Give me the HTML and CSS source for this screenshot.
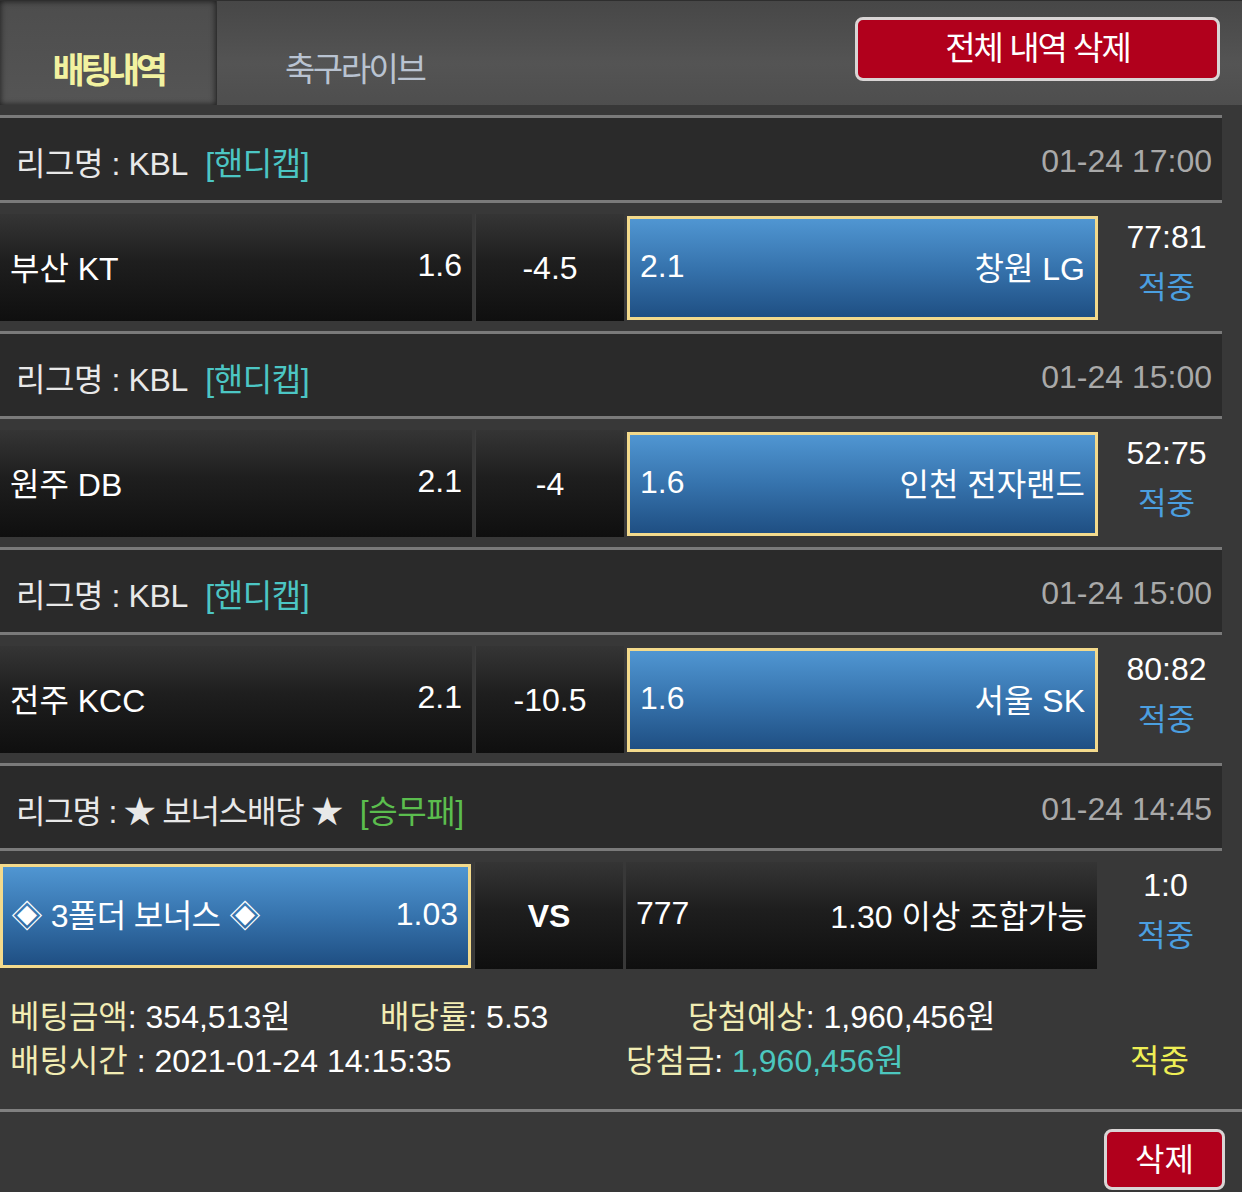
FILE: index.html
```html
<!DOCTYPE html>
<html lang="ko">
<head>
<meta charset="utf-8">
<title>배팅내역</title>
<link rel="stylesheet" href="styles.css">
</head>
<body>
<div class="page">
  <header class="topbar">
    <div class="tab tab-active">배팅내역</div>
    <div class="tab tab-live">축구라이브</div>
    <div class="topbar-spacer"></div>
    <button class="btn-red btn-delete-all">전체 내역 삭제</button>
  </header>

  <section class="slip">
    <div class="league">
      <span class="league-name">리그명 : KBL <span class="tag tag-hdp">[핸디캡]</span></span>
      <span class="league-date">01-24 17:00</span>
    </div>
    <div class="match">
      <div class="cell cell-dark cell-team"><span>부산 KT</span><span>1.6</span></div>
      <div class="cell cell-dark cell-mid"><span class="mid-val">-4.5</span></div>
      <div class="cell cell-blue cell-team"><span>2.1</span><span>창원 LG</span></div>
      <div class="result"><span class="score">77:81</span><span class="hit">적중</span></div>
    </div>

    <div class="league">
      <span class="league-name">리그명 : KBL <span class="tag tag-hdp">[핸디캡]</span></span>
      <span class="league-date">01-24 15:00</span>
    </div>
    <div class="match">
      <div class="cell cell-dark cell-team"><span>원주 DB</span><span>2.1</span></div>
      <div class="cell cell-dark cell-mid"><span class="mid-val">-4</span></div>
      <div class="cell cell-blue cell-team"><span>1.6</span><span>인천 전자랜드</span></div>
      <div class="result"><span class="score">52:75</span><span class="hit">적중</span></div>
    </div>

    <div class="league">
      <span class="league-name">리그명 : KBL <span class="tag tag-hdp">[핸디캡]</span></span>
      <span class="league-date">01-24 15:00</span>
    </div>
    <div class="match">
      <div class="cell cell-dark cell-team"><span>전주 KCC</span><span>2.1</span></div>
      <div class="cell cell-dark cell-mid"><span class="mid-val">-10.5</span></div>
      <div class="cell cell-blue cell-team"><span>1.6</span><span>서울 SK</span></div>
      <div class="result"><span class="score">80:82</span><span class="hit">적중</span></div>
    </div>

    <div class="league">
      <span class="league-name league-bonus">리그명 : ★ 보너스배당 ★ <span class="tag tag-wdl">[승무패]</span></span>
      <span class="league-date">01-24 14:45</span>
    </div>
    <div class="match match-bonus">
      <div class="cell cell-blue cell-team cell-left"><span class="bonus-name">◈ 3폴더 보너스 ◈</span><span>1.03</span></div>
      <div class="cell cell-dark cell-mid"><span class="vs">VS</span></div>
      <div class="cell cell-dark cell-team"><span>777</span><span>1.30 이상 조합가능</span></div>
      <div class="result"><span class="score">1:0</span><span class="hit">적중</span></div>
    </div>

    <div class="summary">
      <div class="sum-row sum-row-1">
        <span><span class="lbl">베팅금액</span>: 354,513원</span>
        <span><span class="lbl">배당률</span>: 5.53</span>
        <span><span class="lbl">당첨예상</span>: 1,960,456원</span>
      </div>
      <div class="sum-row sum-row-2">
        <span><span class="lbl">배팅시간</span> : 2021-01-24 14:15:35</span>
        <span><span class="lbl">당첨금</span>: <span class="win">1,960,456원</span></span>
        <span class="final-hit">적중</span>
      </div>
    </div>
  </section>

  <footer class="footer">
    <button class="btn-red btn-delete">삭제</button>
  </footer>
</div>
</body>
</html>
```

FILE: styles.css
```css
* { box-sizing: border-box; }

html, body {
  margin: 0;
  padding: 0;
  background: #383838;
}

body {
  font-family: "Liberation Sans", "Noto Sans CJK KR", sans-serif;
  color: #ffffff;
  width: 1242px;
  height: 1192px;
  overflow: hidden;
}

.page {
  display: flex;
  flex-direction: column;
}

/* ---------- top bar ---------- */
.topbar {
  height: 105px;
  display: flex;
  align-items: stretch;
  background: linear-gradient(#474747, #545454 60%, #4e4e4e);
  border-top: 1px solid #2e2e2e;
}

.tab {
  display: flex;
  align-items: center;
  padding-top: 28px;
  font-family: "Noto Sans CJK KR", sans-serif;
}

.tab-active {
  width: 217px;
  justify-content: center;
  background: linear-gradient(#4d4d4d, #555555);
  box-shadow: inset 0 0 6px rgba(0, 0, 0, 0.7);
  border-right: 1px solid #303030;
  color: #f2f2a0;
  font-weight: 700;
  font-size: 35px;
  letter-spacing: -4.5px;
}

.tab-live {
  padding-left: 68px;
  color: #b9c3d1;
  font-size: 33px;
  letter-spacing: -2.5px;
}

.topbar-spacer { flex: 1; }

.btn-red {
  background: #b1001c;
  color: #ffffff;
  border: 3px solid #d9d5d5;
  border-radius: 8px;
  font-family: "Noto Sans CJK KR", sans-serif;
  padding: 0;
  cursor: pointer;
}

.btn-delete-all {
  align-self: flex-start;
  margin-top: 16px;
  margin-right: 22px;
  width: 365px;
  height: 64px;
  font-size: 33px;
  letter-spacing: -2px;
  line-height: 1;
  padding-bottom: 6px;
}

/* ---------- slip ---------- */
.slip {
  margin-top: 10px;
}

.league {
  width: 1222px;
  height: 88px;
  background: #2a2a2a;
  border-top: 3px solid #7a7a7a;
  border-bottom: 3px solid #7a7a7a;
  display: flex;
  align-items: center;
  justify-content: space-between;
  padding: 4px 10px 0 16px;
  font-size: 32px;
}

.league-name { color: #e8e8e8; letter-spacing: -0.4px; }
.league-bonus { letter-spacing: -1.2px; }
.tag { margin-left: 10px; }
.tag-hdp { color: #4cc6c4; }
.tag-wdl { color: #5bbd4e; letter-spacing: -0.4px; }
.league-date { color: #a9a9a9; }

.match {
  height: 128px;
  display: flex;
  align-items: stretch;
  padding: 11px 0 10px 0;
  font-size: 32px;
}

.cell {
  display: flex;
  align-items: center;
}

.cell-dark {
  background: linear-gradient(#353535, #1e1e1e 45%, #0f0f0f);
}

.cell-team {
  width: 472px;
  justify-content: space-between;
  padding: 0 10px 4px 10px;
}

.cell-mid {
  width: 149px;
  margin-left: 3px;
  justify-content: center;
  border-left: 1px solid #3c3c3c;
}

.mid-val { padding-top: 2px; }

.vs {
  font-weight: 700;
  font-size: 32px;
  padding-top: 2px;
}

.cell-blue {
  margin: 2px 0 1px 3px;
  background: linear-gradient(#5096d2, #3673ad 50%, #1f4f83);
  border: 3px solid #f3da8c;
  padding: 0 10px 4px 10px;
}

.match .cell-blue.cell-team { width: 471px; }

.match-bonus .cell-left {
  margin-left: 0;
  padding-left: 8px;
}

.bonus-name { letter-spacing: -0.6px; }

.match-bonus .cell-mid + .cell-dark.cell-team {
  margin-left: 3px;
  width: 471px;
}

.result {
  width: 137px;
  display: flex;
  flex-direction: column;
  align-items: center;
  justify-content: flex-start;
  line-height: 47px;
}

.score { color: #ffffff; font-size: 32px; }
.hit { color: #4b9fe0; font-size: 31px; font-family: "Noto Sans CJK KR", sans-serif; }

/* ---------- summary ---------- */
.summary {
  height: 133px;
  border-bottom: 3px solid #808080;
  padding-top: 12px;
  font-size: 32px;
}

.sum-row {
  display: grid;
  align-items: center;
  height: 44px;
}

.sum-row-1 { grid-template-columns: 370px 308px 1fr; padding-left: 10px; }
.sum-row-2 { grid-template-columns: 616px 504px 1fr; padding-left: 10px; }

.lbl { color: #f1ecb3; }
.win { color: #4cc7bf; }
.final-hit { color: #eeee55; font-family: "Noto Sans CJK KR", sans-serif; }

/* ---------- footer ---------- */
.footer {
  display: flex;
  justify-content: flex-end;
  padding: 17px 17px 0 0;
}

.btn-delete {
  width: 121px;
  height: 61px;
  font-size: 32px;
  line-height: 1;
  padding-bottom: 6px;
}
```
